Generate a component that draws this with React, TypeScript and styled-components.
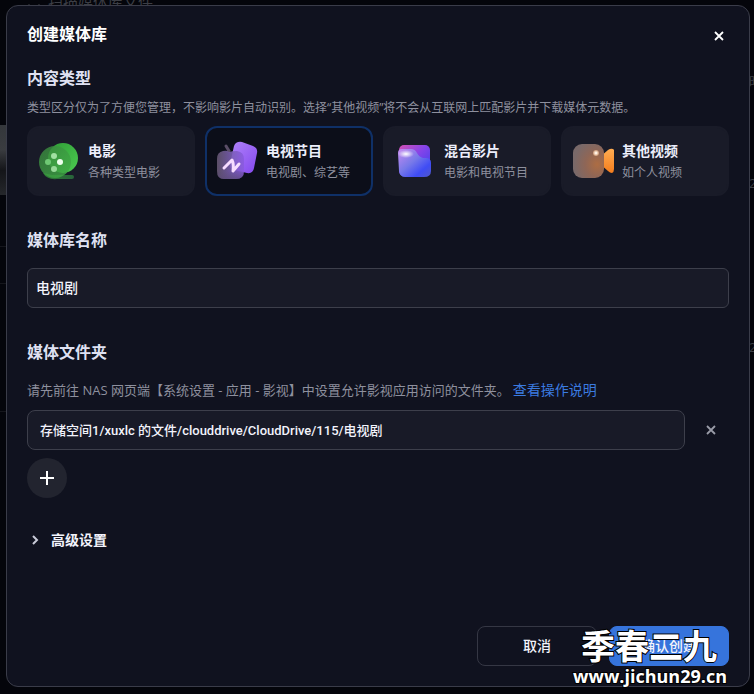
import React, { useState } from "react";
import styled, { createGlobalStyle, css } from "styled-components";

const GlobalStyle = createGlobalStyle`
  *, *::before, *::after { box-sizing: border-box; }
  body {
    margin: 0;
    background: #04050b;
    color: #e4e6f4;
    font-family: "Open Sans", "Noto Sans CJK SC", sans-serif;
    font-size: 14px;
    line-height: 20px;
  }
  button, input { font: inherit; color: inherit; }
`;

const Screen = styled.div`
  position: relative;
  min-height: 100vh;
  padding: 5px 4px 7px 6px;
  overflow: hidden;
`;

const Backdrop = styled.div`
  position: absolute;
  inset: 0;
  color: #3c3e45;
  overflow: hidden;
`;

const BackdropMenu = styled.div`
  position: absolute;
  top: -7px;
  left: 28px;
  display: flex;
  align-items: center;
  gap: 8px;
  font-size: 15px;
  line-height: 18px;
`;

const Poster = styled.div`
  position: absolute;
  top: 125px;
  left: 0;
  width: 6px;
  height: 70px;
  background: linear-gradient(#34373b, #3a3c40 35%, #141519 65%, #25272b);
`;

const Rule = styled.div<{ $top: number }>`
  position: absolute;
  top: ${(p) => p.$top}px;
  left: 0;
  width: 6px;
  height: 1px;
  background: #15161c;
`;

const EdgeText = styled.span<{ $top: number }>`
  position: absolute;
  top: ${(p) => p.$top}px;
  left: calc(100% - 5px);
  font-size: 13px;
  white-space: nowrap;
`;

const Dialog = styled.section`
  position: relative;
  display: flex;
  flex-direction: column;
  min-height: calc(100vh - 12px);
  padding: 16px 20px 20px;
  border: 1px solid #3a3c49;
  border-radius: 12px;
  background: #10121f;
`;

const Header = styled.header`
  display: flex;
  justify-content: space-between;
  align-items: flex-end;
  height: 24px;
  margin-bottom: 20px;
`;

const headingText = css`
  margin: 0;
  font-size: 16px;
  line-height: 24px;
  font-weight: 700;
`;

const Title = styled.h1`
  ${headingText}
  color: #fff;
`;

const Heading = styled.h2`
  ${headingText}
  color: #dfe1f2;
`;

const IconButton = styled.button<{ $muted?: boolean }>`
  display: grid;
  place-items: center;
  width: 20px;
  height: 20px;
  padding: 0;
  border: 0;
  background: none;
  color: ${(p) => (p.$muted ? "#9a9ca8" : "#fff")};
  cursor: pointer;
`;

const Section = styled.section<{ $gap: number }>`
  display: flex;
  flex-direction: column;
  gap: ${(p) => p.$gap}px;
  margin-bottom: 32px;
`;

const Hint = styled.p<{ $size: number }>`
  margin: 0;
  color: #8e909e;
  font-size: ${(p) => p.$size}px;
  line-height: 20px;
`;

const HelpLink = styled.a`
  color: #3b7be0;
  margin-left: 3px;
  font-size: 14px;
  text-decoration: none;
`;

const Cards = styled.div`
  display: grid;
  grid-template-columns: repeat(4, 1fr);
  gap: 10px;
`;

const Card = styled.label<{ $active: boolean }>`
  display: flex;
  align-items: center;
  gap: 8px;
  height: 70px;
  padding: 2px 9px 0;
  border: 2px solid ${(p) => (p.$active ? "#0f3067" : "#191b28")};
  border-radius: 12px;
  background: ${(p) => (p.$active ? "#0c0e19" : "#191b28")};
  cursor: pointer;
`;

const HiddenRadio = styled.input`
  position: absolute;
  opacity: 0;
  pointer-events: none;
`;

const CardText = styled.span`
  display: flex;
  flex-direction: column;
  gap: 2px;
  white-space: nowrap;
`;

const CardTitle = styled.span`
  color: #eceefb;
  font-weight: 700;
`;

const CardNote = styled.span`
  color: #8e909e;
  font-size: 12px;
`;

const TextField = styled.input<{ $path?: boolean }>`
  flex: 1;
  width: 100%;
  min-width: 0;
  height: 40px;
  padding: 0 ${(p) => (p.$path ? 12 : 8)}px 2px;
  border: 1px solid #3d3f4b;
  border-radius: ${(p) => (p.$path ? 8 : 6)}px;
  outline: 0;
  background: #181a27;
  color: #f2f3fb;
  font-family: Roboto, "Noto Sans CJK SC", sans-serif;
  font-size: ${(p) => (p.$path ? 13 : 14)}px;
  font-weight: 500;
`;

const NameRow = styled.div`
  display: flex;
`;

const FolderList = styled.div`
  display: flex;
  flex-direction: column;
  gap: 8px;
`;

const FolderRow = styled.div`
  display: flex;
  align-items: center;
  gap: 16px;
  padding-right: 8px;
`;

const FolderSection = styled.div`
  display: flex;
  flex-direction: column;
  gap: 10px;
`;

const AddButton = styled.button`
  display: grid;
  place-items: center;
  width: 40px;
  height: 40px;
  padding: 0;
  border: 0;
  border-radius: 50%;
  background: #22242f;
  color: #fff;
  cursor: pointer;
`;

const Advanced = styled.button`
  display: flex;
  align-items: center;
  align-self: flex-start;
  gap: 8px;
  height: 20px;
  padding: 0;
  border: 0;
  background: none;
  color: #f2f3fb;
  font-weight: 700;
  cursor: pointer;
`;

const Footer = styled.footer`
  display: flex;
  justify-content: flex-end;
  gap: 12px;
  margin-top: auto;
`;

const ActionButton = styled.button<{ $primary?: boolean }>`
  width: 120px;
  height: 40px;
  padding: 0;
  border: 1px solid ${(p) => (p.$primary ? "#3674dc" : "#353744")};
  border-radius: 8px;
  background: ${(p) => (p.$primary ? "#3674dc" : "transparent")};
  color: #f2f3fb;
  font-weight: 500;
  cursor: pointer;
`;

const Watermark = styled.div`
  position: absolute;
  right: 27px;
  bottom: 8px;
  color: #fff;
  text-align: center;
  white-space: nowrap;
  pointer-events: none;
  -webkit-text-stroke: 2px #000;
  paint-order: stroke fill;
`;

const WatermarkName = styled.div`
  padding-right: 2px;
  font-family: "Noto Sans CJK SC", sans-serif;
  font-size: 34px;
  font-weight: 700;
  line-height: 42px;
`;

const WatermarkSite = styled.div`
  font-size: 18px;
  font-weight: 700;
  line-height: 20px;
`;

const FilmIcon = () => (
  <svg width="42" height="42" viewBox="0 0 42 42" aria-hidden="true">
    <defs>
      <linearGradient id="filmBack" x1="0" y1="0" x2="1" y2="1">
        <stop offset="0" stopColor="#2e9b35" />
        <stop offset="1" stopColor="#4ccb51" />
      </linearGradient>
      <linearGradient id="filmFront" x1="0" y1="0" x2="1" y2="1">
        <stop offset="0" stopColor="#39843e" />
        <stop offset="1" stopColor="#3fae45" />
      </linearGradient>
      <linearGradient id="filmTail" x1="0" y1="0" x2="1" y2="0">
        <stop offset="0" stopColor="#2e7d34" />
        <stop offset="1" stopColor="#28643a" />
      </linearGradient>
    </defs>
    <path d="M14 34h20q2 0 2 2t-2 2H19Q9 39 5 32z" fill="url(#filmTail)" />
    <circle cx="25" cy="17" r="15" fill="url(#filmBack)" />
    <circle cx="17" cy="21" r="16" fill="url(#filmFront)" opacity=".82" />
    <circle cx="16" cy="15" r="3" fill="#a1e0a2" />
    <circle cx="10" cy="21" r="3" fill="#6fc974" />
    <circle cx="22" cy="21" r="3" fill="#edffed" />
    <circle cx="16" cy="28" r="3" fill="#97d998" />
  </svg>
);

const TvIcon = () => (
  <svg width="42" height="42" viewBox="0 0 42 42" aria-hidden="true">
    <defs>
      <linearGradient id="tvBack" x1="0" y1="0" x2="1" y2="1">
        <stop offset="0" stopColor="#b184fa" />
        <stop offset="1" stopColor="#8448ee" />
      </linearGradient>
      <linearGradient id="tvFront" x1="0" y1="0" x2="1" y2="0">
        <stop offset="0" stopColor="#64566f" />
        <stop offset=".6" stopColor="#7c5ebb" />
        <stop offset="1" stopColor="#8a5ae0" />
      </linearGradient>
      <linearGradient id="tvShade" x1="0" y1="0" x2="0" y2="1">
        <stop offset=".5" stopColor="#5c4b78" stopOpacity="0" />
        <stop offset="1" stopColor="#5c4b78" />
      </linearGradient>
    </defs>
    <path d="M10 5l3 5" stroke="#5a4d66" strokeWidth="3" strokeLinecap="round" />
    <path
      d="M18 5q2-5 8-4l11 4q5 2 4 7l-3 15q-1 6-7 5l-13-3q-5-1-4-6z"
      fill="url(#tvBack)"
    />
    <path
      d="M7 10q4-1 6 1q3-1 8-1q7 1 7 8v12q0 8-8 8H8q-7 0-7-8V18q0-7 6-8z"
      fill="url(#tvFront)"
      opacity=".9"
    />
    <path
      d="M1 22h27v8q0 8-8 8H8q-7 0-7-8z"
      fill="url(#tvShade)"
      opacity=".7"
    />
    <path
      d="M8 27l8-8q2 4 1 11l6-7"
      fill="none"
      stroke="#f6dcff"
      strokeWidth="3"
      strokeLinecap="round"
      strokeLinejoin="round"
    />
  </svg>
);

const MixedIcon = () => (
  <svg width="42" height="42" viewBox="0 0 42 42" aria-hidden="true">
    <defs>
      <linearGradient id="mixBack" x1="0" y1="0" x2="1" y2="1">
        <stop offset="0" stopColor="#d451b5" />
        <stop offset=".45" stopColor="#8544e9" />
        <stop offset="1" stopColor="#2f3fef" />
      </linearGradient>
      <linearGradient id="mixFront" x1="0" y1="0" x2="1" y2="1">
        <stop offset="0" stopColor="#c88cf0" />
        <stop offset=".45" stopColor="#7779e9" />
        <stop offset=".75" stopColor="#3f4cf5" />
        <stop offset="1" stopColor="#5057c8" />
      </linearGradient>
      <radialGradient id="mixGlow">
        <stop offset="0" stopColor="#fff" />
        <stop offset="1" stopColor="#fff" stopOpacity="0" />
      </radialGradient>
    </defs>
    <rect x="5" y="4" width="31" height="31" rx="5" fill="url(#mixBack)" />
    <path
      d="M4 12q0-4 4-4h9q4 0 6 4t6 5h3q5 0 5 5v8q0 6-7 6H11q-5 0-6-6z"
      fill="url(#mixFront)"
    />
    <ellipse cx="12" cy="13" rx="8" ry="4" fill="url(#mixGlow)" />
  </svg>
);

const CameraIcon = () => (
  <svg width="42" height="42" viewBox="0 0 42 42" aria-hidden="true">
    <defs>
      <linearGradient id="camLens" x1="0" y1="0" x2="0" y2="1">
        <stop offset="0" stopColor="#ffad52" />
        <stop offset="1" stopColor="#f57d1d" />
      </linearGradient>
      <radialGradient id="camBody" cx=".78" cy=".6" r=".75">
        <stop offset="0" stopColor="#ad6d43" />
        <stop offset=".5" stopColor="#8f6656" />
        <stop offset="1" stopColor="#796969" />
      </radialGradient>
      <radialGradient id="camLight">
        <stop offset=".3" stopColor="#fff2e4" />
        <stop offset="1" stopColor="#f0b98d" stopOpacity=".6" />
      </radialGradient>
    </defs>
    <path
      d="M28 16l8-7q3-2 5-1t1 4V28q0 3-2 4q-2 0-4-2l-8-7z"
      fill="url(#camLens)"
    />
    <rect x="1" y="3" width="31" height="34" rx="9" fill="url(#camBody)" />
    <circle cx="24" cy="12" r="3" fill="url(#camLight)" />
  </svg>
);

const Cross = () => (
  <svg width="10" height="10" viewBox="0 0 10 10" aria-hidden="true">
    <path d="M1 1l8 8M9 1L1 9" stroke="currentColor" strokeWidth="1.8" />
  </svg>
);

const kinds = [
  { id: "movie", title: "电影", note: "各种类型电影", Icon: FilmIcon },
  { id: "tv", title: "电视节目", note: "电视剧、综艺等", Icon: TvIcon },
  { id: "mixed", title: "混合影片", note: "电影和电视节目", Icon: MixedIcon },
  { id: "other", title: "其他视频", note: "如个人视频", Icon: CameraIcon },
];

export default function App() {
  const [kind, setKind] = useState("tv");
  const [name, setName] = useState("电视剧");
  const [folder, setFolder] = useState(
    "存储空间1/xuxlc 的文件/clouddrive/CloudDrive/115/电视剧"
  );

  return (
    <>
      <GlobalStyle />
      <Screen>
        <Backdrop aria-hidden="true">
          <BackdropMenu>
            <svg width="12" height="14" viewBox="0 0 12 14">
              <path d="M1 9v4h3M11 9v4H8" fill="none" stroke="currentColor" />
            </svg>
            扫描媒体库文件
          </BackdropMenu>
          <Poster />
          <Rule $top={246} />
          <Rule $top={283} />
          <Rule $top={411} />
          <EdgeText $top={71}>昨</EdgeText>
          <EdgeText $top={173}>2</EdgeText>
          <EdgeText $top={337}>2</EdgeText>
        </Backdrop>
        <Dialog role="dialog" aria-labelledby="dialog-title">
          <Header>
            <Title id="dialog-title">创建媒体库</Title>
            <IconButton type="button" aria-label="关闭">
              <Cross />
            </IconButton>
          </Header>

          <Section $gap={8}>
            <Heading>内容类型</Heading>
            <Hint $size={12}>
              类型区分仅为了方便您管理，不影响影片自动识别。选择“其他视频”将不会从互联网上匹配影片并下载媒体元数据。
            </Hint>
            <Cards>
              {kinds.map(({ id, title, note, Icon }) => (
                <Card key={id} $active={kind === id}>
                  <HiddenRadio
                    type="radio"
                    name="kind"
                    checked={kind === id}
                    onChange={() => setKind(id)}
                  />
                  <Icon />
                  <CardText>
                    <CardTitle>{title}</CardTitle>
                    <CardNote>{note}</CardNote>
                  </CardText>
                </Card>
              ))}
            </Cards>
          </Section>

          <Section $gap={16}>
            <Heading>
              <label htmlFor="library-name">媒体库名称</label>
            </Heading>
            <NameRow>
              <TextField
                id="library-name"
                value={name}
                onChange={(e) => setName(e.target.value)}
              />
            </NameRow>
          </Section>

          <Section $gap={16}>
            <Heading>
              <label htmlFor="library-folder">媒体文件夹</label>
            </Heading>
            <FolderSection>
              <Hint $size={13}>
                请先前往 NAS 网页端【系统设置 - 应用 - 影视】中设置允许影视应用访问的文件夹。
                <HelpLink href="#help">查看操作说明</HelpLink>
              </Hint>
              <FolderList>
                <FolderRow>
                  <TextField
                    $path
                    id="library-folder"
                    value={folder}
                    onChange={(e) => setFolder(e.target.value)}
                  />
                  <IconButton type="button" $muted aria-label="移除文件夹">
                    <Cross />
                  </IconButton>
                </FolderRow>
                <AddButton type="button" aria-label="添加文件夹">
                  <svg width="16" height="16" viewBox="0 0 16 16" aria-hidden="true">
                    <path d="M8 1v14M1 8h14" stroke="currentColor" strokeWidth="2" />
                  </svg>
                </AddButton>
              </FolderList>
            </FolderSection>
          </Section>

          <Advanced type="button" aria-expanded="false">
            <svg width="16" height="16" viewBox="0 0 16 16" aria-hidden="true">
              <path
                d="M6 4l4 4-4 4"
                fill="none"
                stroke="#c9cbd8"
                strokeWidth="2"
              />
            </svg>
            高级设置
          </Advanced>

          <Footer>
            <ActionButton type="button">取消</ActionButton>
            <ActionButton type="button" $primary>
              确认创建
            </ActionButton>
          </Footer>
        </Dialog>
        <Watermark>
          <WatermarkName>季春二九</WatermarkName>
          <WatermarkSite>www.jichun29.cn</WatermarkSite>
        </Watermark>
      </Screen>
    </>
  );
}
